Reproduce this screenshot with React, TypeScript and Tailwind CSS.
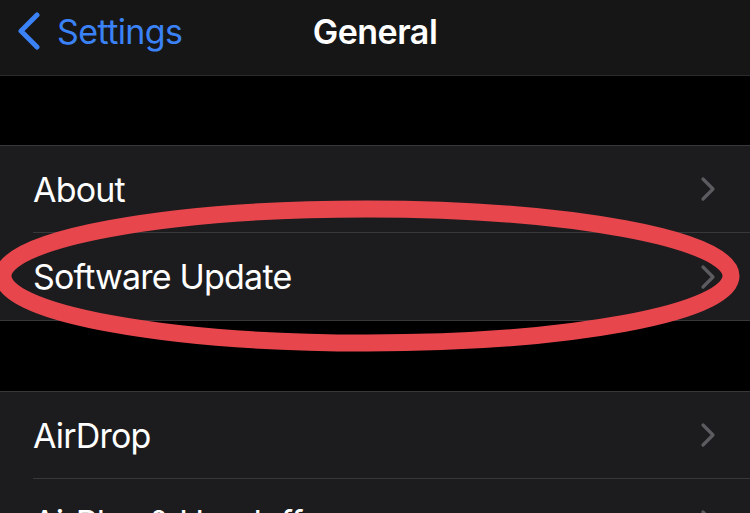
import React from "react";

const Chevron = () => (
  <svg width="16" height="26" viewBox="0 0 16 26" className="shrink-0">
    <path d="M3 3 L13 13 L3 23" fill="none" stroke="#5c5c60" strokeWidth="3.2" strokeLinecap="round" strokeLinejoin="round" />
  </svg>
);

const Row = ({ label, h }: { label: string; h: string }) => (
  <div className={`flex items-center justify-between pl-[33px] pr-[34px] ${h}`}>
    <span className="text-[34px] text-white tracking-[-0.8px]">{label}</span>
    <Chevron />
  </div>
);

export default function App() {
  return (
    <div
      className="relative w-[750px] h-[513px] overflow-hidden bg-black"
      style={{ fontFamily: "Inter, 'Noto Sans', sans-serif" }}
    >
      <header className="relative h-[76px] bg-[#161616] border-b border-[#2a2a2c] flex items-center pb-[13px]">
        <div className="flex items-center pl-[17px] gap-[16px]">
          <svg width="24" height="38" viewBox="0 0 24 38">
            <path d="M20 3 L4 19 L20 35" fill="none" stroke="#3a82f6" strokeWidth="5" strokeLinecap="round" strokeLinejoin="round" />
          </svg>
          <span className="text-[34px] text-[#3a82f6] tracking-[-0.6px]">Settings</span>
        </div>
        <div className="absolute inset-0 flex items-center justify-center pb-[13px]">
          <span className="text-[34px] font-semibold text-white tracking-[-0.5px]">General</span>
        </div>
      </header>
      <div className="h-[69px]" />
      <section className="bg-[#1c1c1e] border-y border-[#38383a]">
        <Row label="About" h="h-[86px]" />
        <div className="ml-[33px] h-px bg-[#38383a]" />
        <Row label="Software Update" h="h-[87px]" />
      </section>
      <div className="h-[70px]" />
      <section className="bg-[#1c1c1e] border-t border-[#38383a]">
        <Row label="AirDrop" h="h-[86px]" />
        <div className="ml-[33px] h-px bg-[#38383a]" />
        <Row label="AirPlay & Handoff" h="h-[86px]" />
      </section>
      <svg className="absolute left-0 top-0" width="750" height="513" viewBox="0 0 750 513">
        <ellipse cx="367" cy="276" rx="364" ry="67" fill="none" stroke="#e8464d" strokeWidth="17" />
      </svg>
    </div>
  );
}
